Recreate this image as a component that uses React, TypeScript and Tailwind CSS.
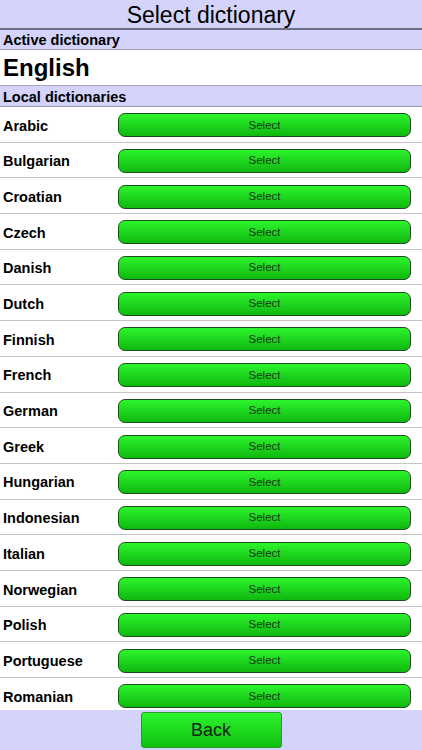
import React from 'react'

const languages = [
  'Arabic', 'Bulgarian', 'Croatian', 'Czech', 'Danish', 'Dutch', 'Finnish', 'French', 'German',
  'Greek', 'Hungarian', 'Indonesian', 'Italian', 'Norwegian', 'Polish', 'Portuguese', 'Romanian',
]

const font = { fontFamily: '"Liberation Sans", Arial, sans-serif' }

export default function App() {
  return (
    <div className="flex h-[750px] w-[422px] flex-col overflow-hidden bg-white text-black" style={font}>
      {/* Title bar */}
      <div className="flex h-[30px] shrink-0 items-center justify-center border-b-2 border-[#6e6e86] bg-[#d3d3fb] pt-[3px]">
        <h1 className="text-[23px] leading-none">Select dictionary</h1>
      </div>

      {/* Active dictionary */}
      <div className="flex h-[20px] shrink-0 items-center border-b border-[#9a9aae] bg-[#d3d3fb] px-[3px] pt-[2px]">
        <span className="text-[14.5px] font-bold leading-none">Active dictionary</span>
      </div>
      <div className="flex h-[36px] shrink-0 items-center border-b border-[#a8a8b8] px-[3px]">
        <span className="text-[24px] font-bold leading-none">English</span>
      </div>

      {/* Local dictionaries */}
      <div className="flex h-[21px] shrink-0 items-center border-b border-[#9a9aae] bg-[#d3d3fb] px-[3px] pt-[2px]">
        <span className="text-[14.5px] font-bold leading-none">Local dictionaries</span>
      </div>

      <div className="min-h-0 flex-1 overflow-hidden">
        {languages.map((lang) => (
          <div
            key={lang}
            className="flex h-[35.7px] items-center border-b border-[#c4c4c4] pl-[3px] pr-[11px] pt-[2px]"
          >
            <span className="w-[115px] pt-px text-[14.5px] font-bold leading-none">{lang}</span>
            <button className="flex h-[24px] flex-1 items-center justify-center rounded-[7px] border border-[#1d4d1d] bg-gradient-to-b from-[#2cf52c] to-[#0fb80f] text-[11.5px] text-[#143814]">
              Select
            </button>
          </div>
        ))}
      </div>

      {/* Footer */}
      <div className="flex h-[40px] shrink-0 items-start justify-center bg-[#d3d3fb] pt-[2px]">
        <button className="flex h-[36px] w-[141px] items-center justify-center rounded-[3px] border border-[#2a9a2a] bg-gradient-to-b from-[#2cf52c] to-[#0fbf0f] text-[18px] text-[#112211]">
          Back
        </button>
      </div>
    </div>
  )
}
